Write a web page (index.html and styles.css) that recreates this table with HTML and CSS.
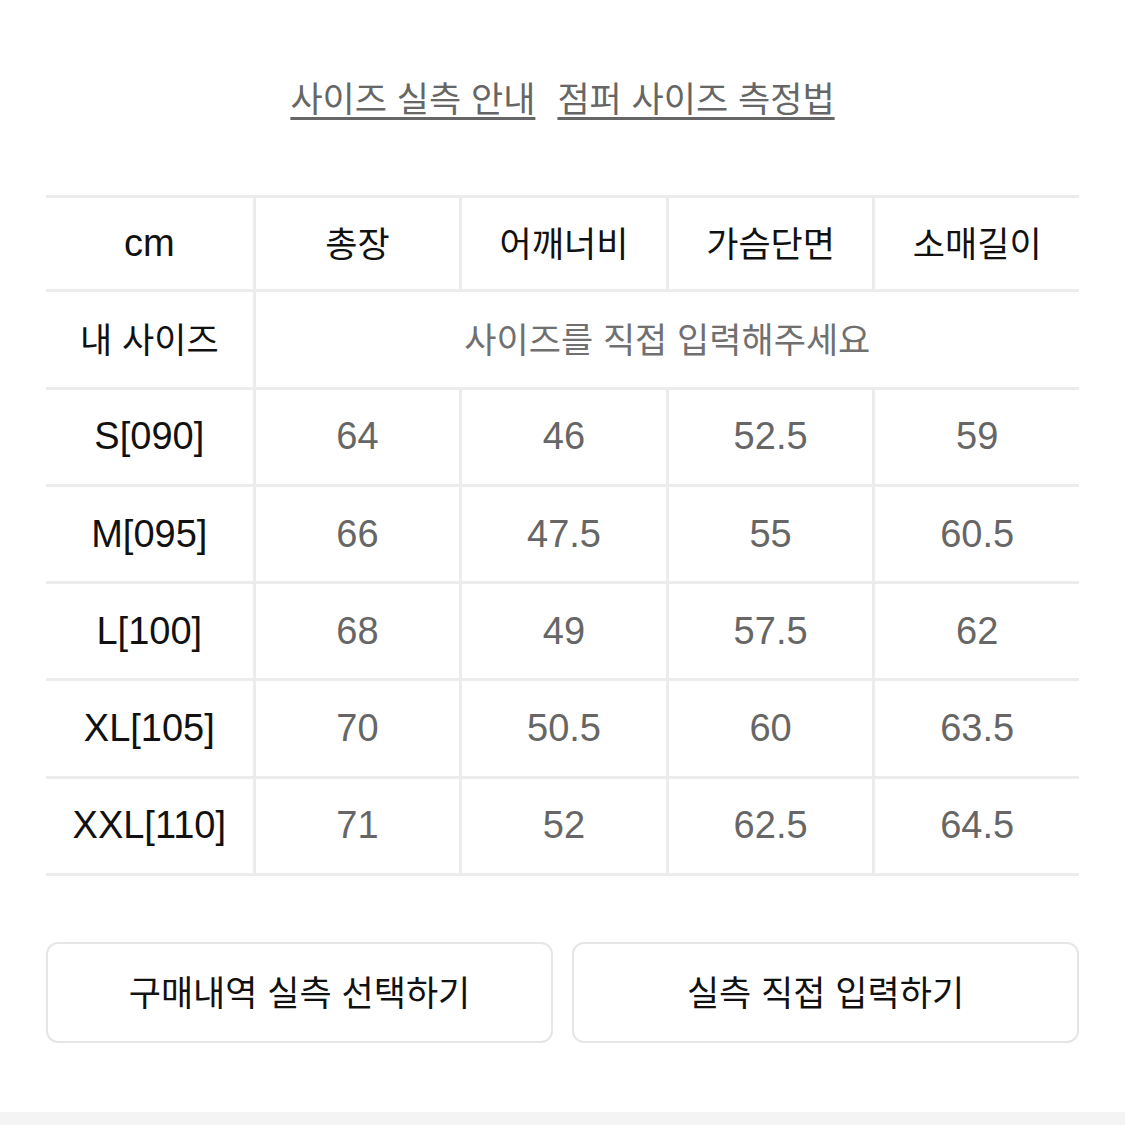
FILE: index.html
```html
<!DOCTYPE html>
<html lang="ko">
<head>
<meta charset="utf-8">
<link rel="stylesheet" href="styles.css">
</head>
<body>
<div class="page">
  <nav class="links">
    <a class="link" href="#">사이즈 실측 안내</a>
    <a class="link" href="#">점퍼 사이즈 측정법</a>
  </nav>
  <div class="table">
    <div class="row head">
      <div class="cell label">cm</div>
      <div class="cell ko">총장</div>
      <div class="cell ko">어깨너비</div>
      <div class="cell ko">가슴단면</div>
      <div class="cell ko">소매길이</div>
    </div>
    <div class="row">
      <div class="cell label ko">내 사이즈</div>
      <div class="cell span ko placeholder">사이즈를 직접 입력해주세요</div>
    </div>
    <div class="row">
      <div class="cell label">S[090]</div>
      <div class="cell val">64</div><div class="cell val">46</div><div class="cell val">52.5</div><div class="cell val">59</div>
    </div>
    <div class="row">
      <div class="cell label">M[095]</div>
      <div class="cell val">66</div><div class="cell val">47.5</div><div class="cell val">55</div><div class="cell val">60.5</div>
    </div>
    <div class="row">
      <div class="cell label">L[100]</div>
      <div class="cell val">68</div><div class="cell val">49</div><div class="cell val">57.5</div><div class="cell val">62</div>
    </div>
    <div class="row">
      <div class="cell label">XL[105]</div>
      <div class="cell val">70</div><div class="cell val">50.5</div><div class="cell val">60</div><div class="cell val">63.5</div>
    </div>
    <div class="row">
      <div class="cell label">XXL[110]</div>
      <div class="cell val">71</div><div class="cell val">52</div><div class="cell val">62.5</div><div class="cell val">64.5</div>
    </div>
  </div>
  <div class="buttons">
    <button class="btn">구매내역 실측 선택하기</button>
    <button class="btn">실측 직접 입력하기</button>
  </div>
</div>
<div class="footer-strip"></div>
</body>
</html>
```
FILE: styles.css
```css
html, body {
  margin: 0;
  padding: 0;
  background: #ffffff;
}
body {
  font-family: "Liberation Sans", "Noto Sans CJK KR", sans-serif;
  color: #111;
  height: 1125px;
  display: flex;
  flex-direction: column;
}
.page {
  flex: 1;
  padding: 0 46px;
  display: flex;
  flex-direction: column;
}
.links {
  height: 195px;
  display: flex;
  justify-content: center;
  align-items: flex-start;
  gap: 22px;
  padding-top: 74px;
  box-sizing: border-box;
}
.link {
  font-family: "Noto Sans CJK KR", sans-serif;
  font-size: 35px;
  line-height: 46px;
  color: #666;
  text-decoration: underline;
  text-decoration-thickness: 3px;
  text-underline-offset: 5px;
}
.table {
  border-top: 3px solid #ececec;
  display: flex;
  flex-direction: column;
}
.row {
  display: grid;
  grid-template-columns: repeat(5, 1fr);
  height: 97.3px;
  border-bottom: 3px solid #ececec;
  box-sizing: border-box;
}
.row.head {
  height: 94.3px;
}
.cell {
  display: flex;
  align-items: center;
  justify-content: center;
  border-left: 3px solid #ececec;
  font-size: 38px;
  font-family: "Liberation Sans", "Noto Sans CJK KR", sans-serif;
  color: #111;
}
.cell.label {
  border-left: none;
}
.cell.ko {
  font-family: "Noto Sans CJK KR", sans-serif;
  font-size: 35px;
  padding-bottom: 4px;
  box-sizing: border-box;
}
.cell.val {
  color: #666;
}
.cell.span {
  grid-column: span 4;
}
.cell.placeholder {
  color: #707070;
}
.buttons {
  margin-top: 66px;
  display: grid;
  grid-template-columns: 1fr 1fr;
  gap: 19px;
}
.btn {
  height: 101px;
  background: #fff;
  border: 2px solid #e6e6e6;
  border-radius: 12px;
  font-family: "Noto Sans CJK KR", sans-serif;
  font-size: 35px;
  color: #111;
  padding: 0 0 4px;
}
.footer-strip {
  height: 13px;
  background: #f4f4f4;
}
```
